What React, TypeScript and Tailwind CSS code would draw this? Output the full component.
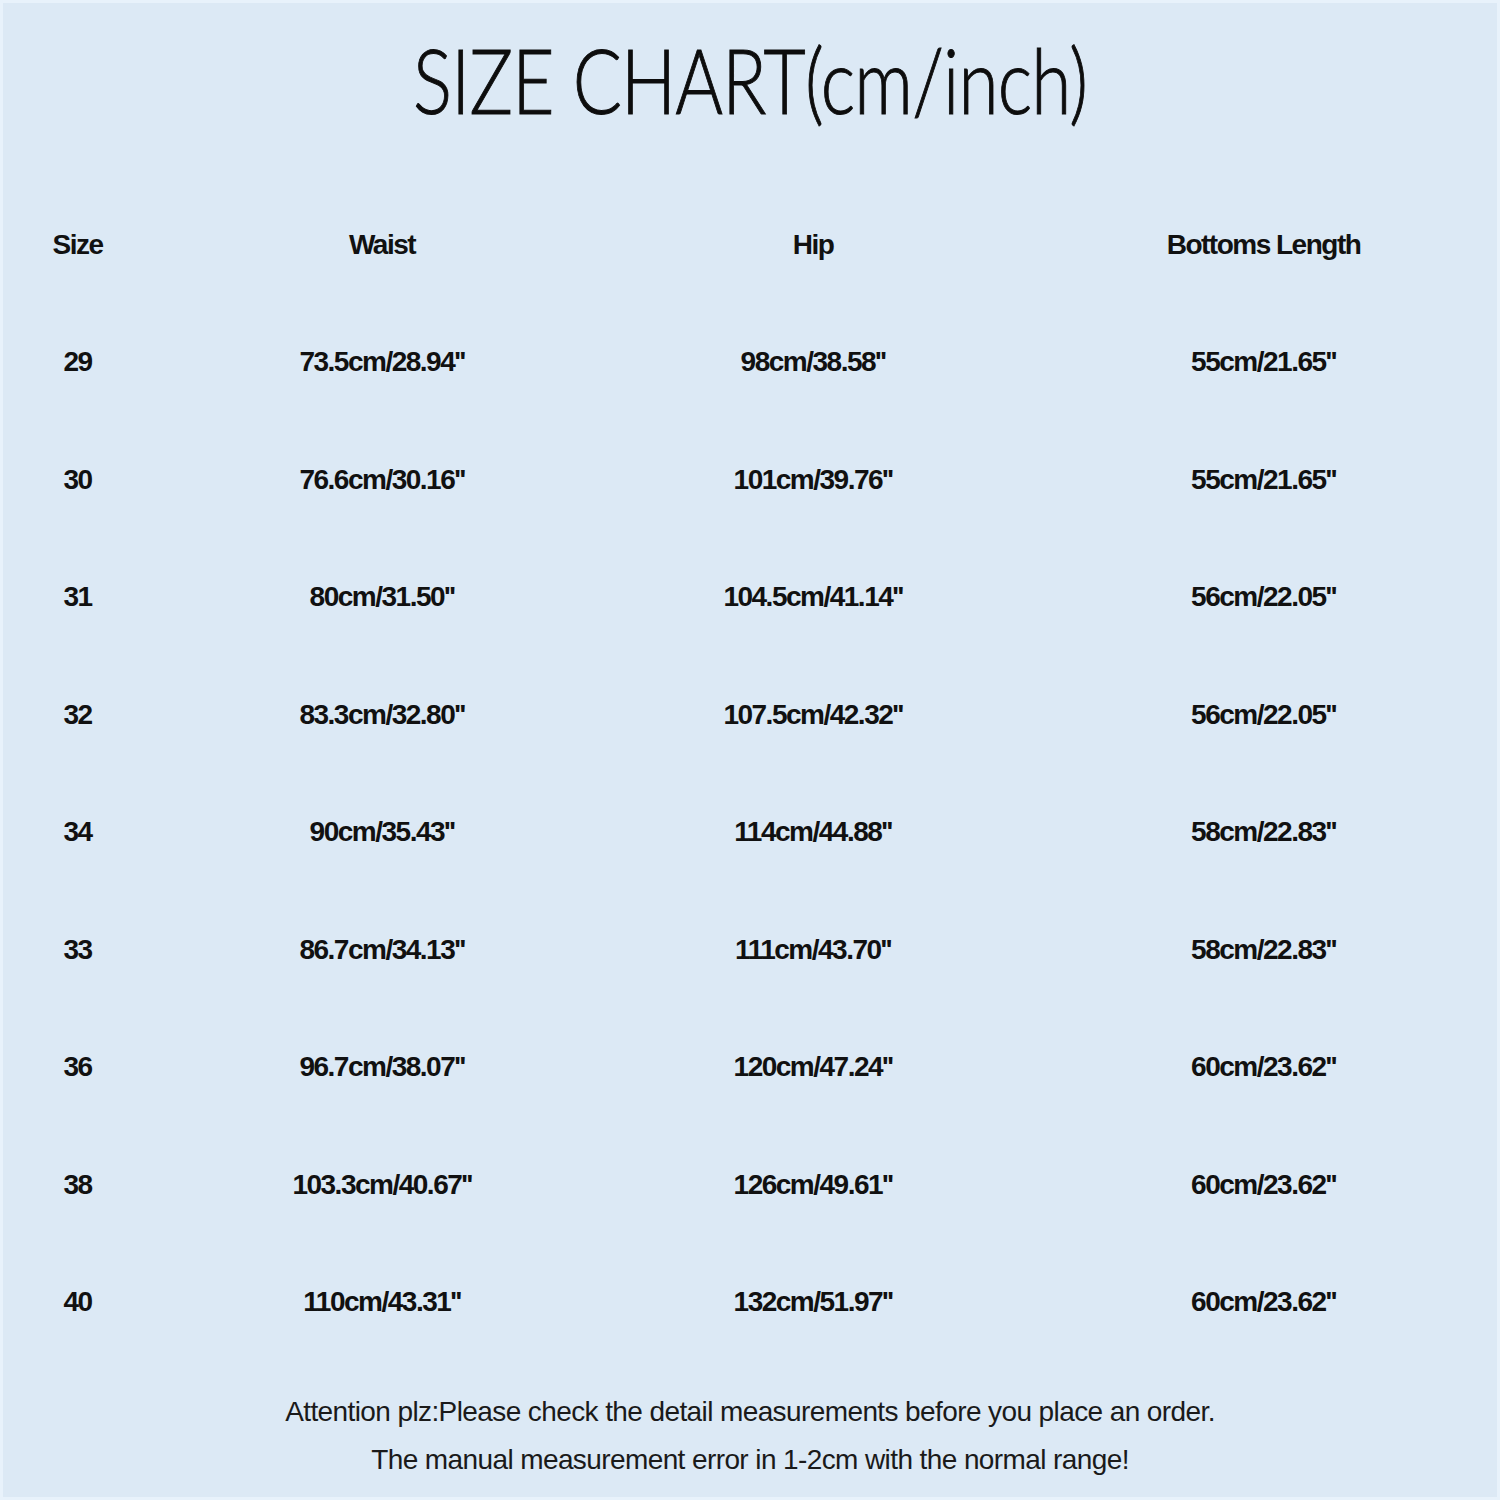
const rows: Array<[string, string, string, string]> = [
  ['29', "73.5cm/28.94''", "98cm/38.58''", "55cm/21.65''"],
  ['30', "76.6cm/30.16''", "101cm/39.76''", "55cm/21.65''"],
  ['31', "80cm/31.50''", "104.5cm/41.14''", "56cm/22.05''"],
  ['32', "83.3cm/32.80''", "107.5cm/42.32''", "56cm/22.05''"],
  ['34', "90cm/35.43''", "114cm/44.88''", "58cm/22.83''"],
  ['33', "86.7cm/34.13''", "111cm/43.70''", "58cm/22.83''"],
  ['36', "96.7cm/38.07''", "120cm/47.24''", "60cm/23.62''"],
  ['38', "103.3cm/40.67''", "126cm/49.61''", "60cm/23.62''"],
  ['40', "110cm/43.31''", "132cm/51.97''", "60cm/23.62''"],
];

const cell = 'flex items-center justify-center h-[117.5px]';

export default function App() {
  return (
    <div className="w-[1500px] h-[1500px] bg-[#dce9f5] border-[3px] border-[#e8f2fb] overflow-hidden text-[#111] font-['Liberation_Sans',Arial,sans-serif]">
      {/* Title */}
      <div className="h-[183px] flex justify-center pt-[31px]">
        <h1 className="inline-block scale-x-[0.81] font-['Lato','Liberation_Sans',sans-serif] font-light text-[90px] leading-none tracking-[-1px] text-[#0d0d0d] whitespace-nowrap [-webkit-text-stroke:1px_#0d0d0d]">
          SIZE CHART(cm/inch)
        </h1>
      </div>

      {/* Table */}
      <div className="grid grid-cols-[149px_460px_402px_483px] font-bold text-[28px] tracking-[-1.5px]">
        <div className={cell}>Size</div>
        <div className={cell}>Waist</div>
        <div className={cell}>Hip</div>
        <div className={`${cell} pl-[16px]`}>Bottoms Length</div>
        {rows.map((r, i) => (
          <div key={i} className="contents">
            <div className={cell}>{r[0]}</div>
            <div className={cell}>{r[1]}</div>
            <div className={cell}>{r[2]}</div>
            <div className={`${cell} pl-[16px]`}>{r[3]}</div>
          </div>
        ))}
      </div>

      {/* Notes */}
      <div className="flex flex-col items-center pt-[27px] text-[28px] leading-[48px] tracking-[-0.6px] text-[#1a1a1a]">
        <p className="whitespace-nowrap">Attention plz:Please check the detail measurements before you place an order.</p>
        <p className="whitespace-nowrap">The manual measurement error in 1-2cm with the normal range!</p>
      </div>
    </div>
  );
}
